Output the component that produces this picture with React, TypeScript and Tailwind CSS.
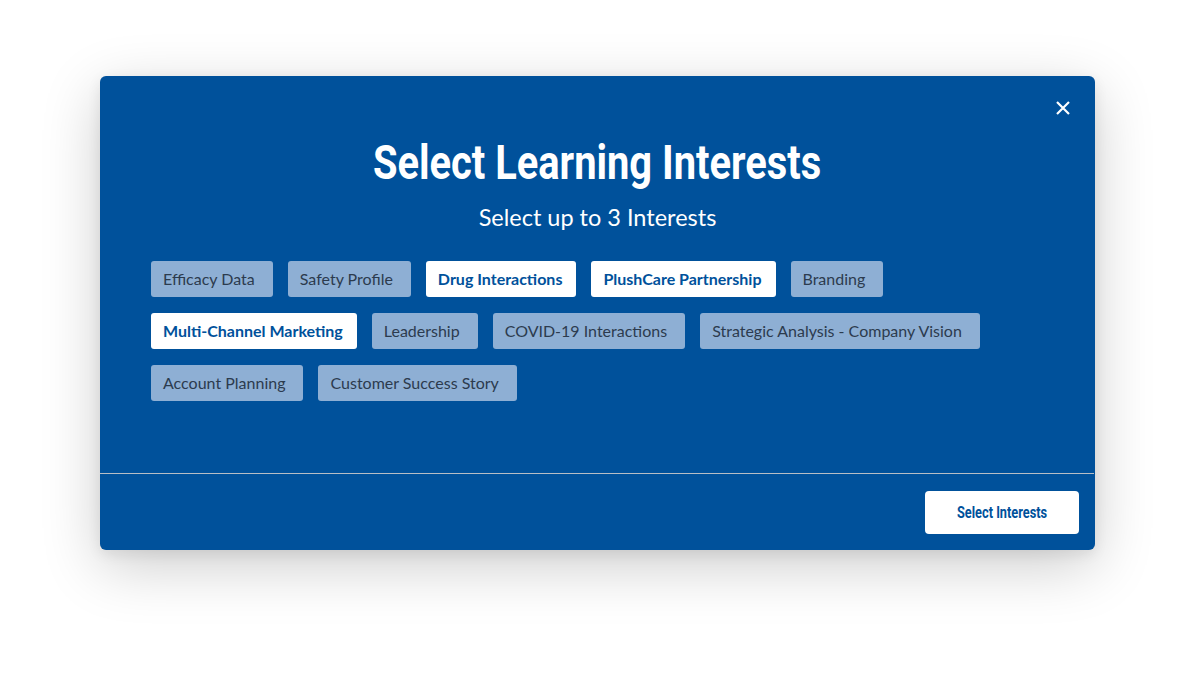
import React from "react";

const chips: { label: string; selected?: boolean }[][] = [
  [
    { label: "Efficacy Data" },
    { label: "Safety Profile" },
    { label: "Drug Interactions", selected: true },
    { label: "PlushCare Partnership", selected: true },
    { label: "Branding" },
  ],
  [
    { label: "Multi-Channel Marketing", selected: true },
    { label: "Leadership" },
    { label: "COVID-19 Interactions" },
    { label: "Strategic Analysis - Company Vision" },
  ],
  [{ label: "Account Planning" }, { label: "Customer Success Story" }],
];

export default function App() {
  return (
    <div className="w-[1195px] h-[675px] bg-white pt-[76px] pl-[100px] overflow-hidden">
      <div className="relative w-[995px] h-[474px] rounded-[6px] bg-[#00519b] shadow-[0_16px_60px_rgba(0,0,0,0.2),0_4px_14px_rgba(0,0,0,0.08)] flex flex-col">
        <button className="absolute right-[24px] top-[24px] w-[16px] h-[16px] flex items-center justify-center">
          <svg width="16" height="16" viewBox="0 0 16 16">
            <path d="M2 2 L14 14 M14 2 L2 14" stroke="white" strokeWidth="2.2" strokeLinecap="butt" />
          </svg>
        </button>
        <div className="h-[397px] flex flex-col items-center pt-[58px]">
          <h1 className="text-white font-bold text-[48px] leading-[58px] font-['Roboto',sans-serif] whitespace-nowrap">
            <span className="inline-block scale-x-[0.83]">Select Learning Interests</span>
          </h1>
          <p className="text-white text-[23.5px] leading-[28px] mt-[11px] font-['Lato',sans-serif]">
            Select up to 3 Interests
          </p>
          <div className="self-stretch pl-[51px] pr-[40px] mt-[30px] flex flex-col gap-[16px]">
            {chips.map((row, i) => (
              <div key={i} className="flex gap-[15px]">
                {row.map((c) => (
                  <div
                    key={c.label}
                    className={
                      c.selected
                        ? "h-[36px] pl-[12px] pr-[14px] rounded-[3px] bg-white text-[#00519b] font-bold text-[16px] leading-[36px] font-['Lato',sans-serif]"
                        : "h-[36px] pl-[12px] pr-[18px] rounded-[3px] bg-[#8eafd4] text-[#2c3b4e] text-[16px] leading-[36px] font-['Lato',sans-serif]"
                    }
                  >
                    {c.label}
                  </div>
                ))}
              </div>
            ))}
          </div>
        </div>
        <div className="h-px bg-[#b9bec5] mr-px" />
        <div className="flex-1 flex justify-end items-start pt-[17px] pr-[16px]">
          <button className="w-[154px] h-[43px] rounded-[4px] bg-white text-[#00519b] font-bold text-[17px] font-['Roboto',sans-serif] whitespace-nowrap flex items-center justify-center">
            <span className="inline-block scale-x-[0.75]">Select Interests</span>
          </button>
        </div>
      </div>
    </div>
  );
}
